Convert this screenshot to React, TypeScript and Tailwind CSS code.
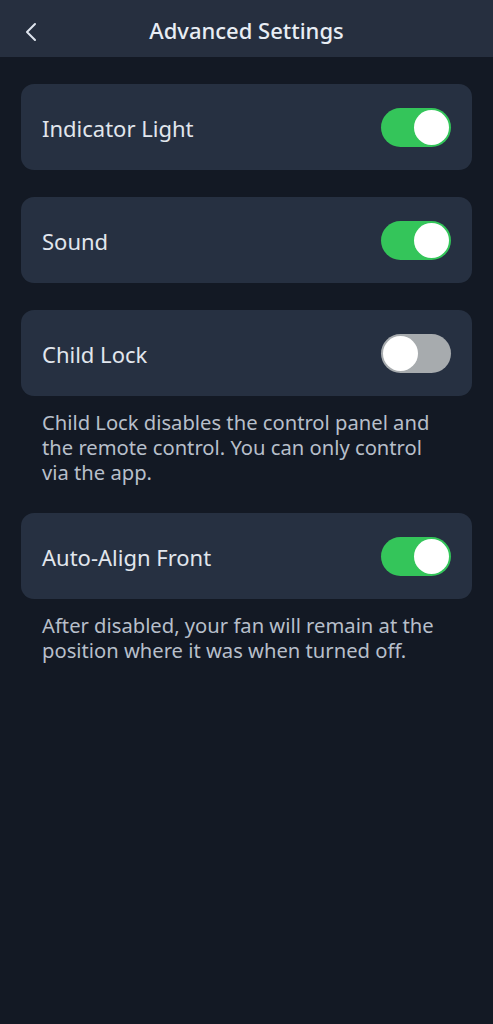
import React, { useState } from 'react';

interface ToggleProps {
  on: boolean;
  onChange: () => void;
}

const Toggle: React.FC<ToggleProps> = ({ on, onChange }) => (
  <button
    onClick={onChange}
    className={`relative flex h-[39px] w-[70px] shrink-0 items-center rounded-full px-[2px] ${
      on ? 'justify-end bg-[#34c55a]' : 'justify-start bg-[#a7abae]'
    }`}
    aria-pressed={on}
  >
    <span className="block h-[35px] w-[35px] rounded-full bg-white" />
  </button>
);

interface SettingProps {
  label: string;
  on: boolean;
  onChange: () => void;
  note?: string;
}

const SettingRow: React.FC<SettingProps> = ({ label, on, onChange, note }) => (
  <div>
    <div className="flex h-[86px] items-center justify-between rounded-[13px] bg-[#263041] pl-[21px] pr-[21px]">
      <span className="pt-[3px] text-[22px] text-[#e1e6ed]">{label}</span>
      <Toggle on={on} onChange={onChange} />
    </div>
    {note && (
      <p className="px-[21px] pb-[1px] pt-[14px] text-[20.2px] leading-[25px] text-[#b7bfca]">{note}</p>
    )}
  </div>
);

export default function App() {
  const [light, setLight] = useState(true);
  const [sound, setSound] = useState(true);
  const [lock, setLock] = useState(false);
  const [align, setAlign] = useState(true);

  return (
    <div
      className="min-h-[1024px] w-full bg-[#131924]"
      style={{ fontFamily: '"Noto Sans", "Open Sans", sans-serif' }}
    >
      <header className="relative flex h-[57px] items-center justify-center bg-[#262f3f] pt-[3px]">
        <button className="absolute left-[20px] top-[18px] p-1" aria-label="Back">
          <svg width="14" height="20" viewBox="0 0 14 20" fill="none">
            <path d="M11 2 L3 10 L11 18" stroke="#dfe5ee" strokeWidth="2" strokeLinecap="round" strokeLinejoin="round" />
          </svg>
        </button>
        <h1 className="text-[22px] font-medium text-[#e8edf4]">Advanced Settings</h1>
      </header>

      <div className="flex flex-col gap-[27px] px-[21px] pt-[27px]">
        <SettingRow label="Indicator Light" on={light} onChange={() => setLight(!light)} />
        <SettingRow label="Sound" on={sound} onChange={() => setSound(!sound)} />
        <SettingRow
          label="Child Lock"
          on={lock}
          onChange={() => setLock(!lock)}
          note="Child Lock disables the control panel and the remote control. You can only control via the app."
        />
        <SettingRow
          label="Auto-Align Front"
          on={align}
          onChange={() => setAlign(!align)}
          note="After disabled, your fan will remain at the position where it was when turned off."
        />
      </div>
    </div>
  );
}
